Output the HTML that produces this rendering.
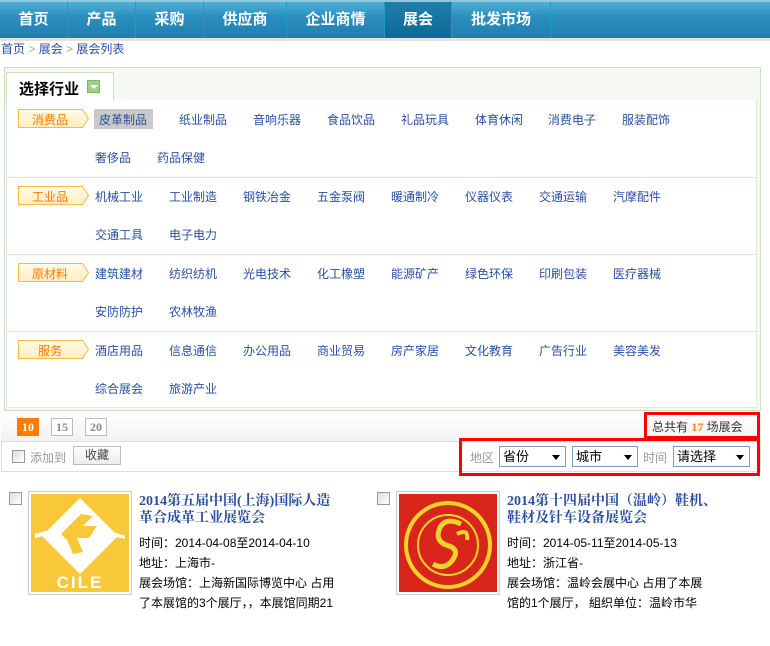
<!DOCTYPE html>
<html><head><meta charset="utf-8"><style>
*{margin:0;padding:0;box-sizing:border-box}
body{width:770px;height:646px;background:#fff;font-family:"Liberation Sans","Noto Sans CJK SC",sans-serif;font-size:12px;color:#000;position:relative;overflow:hidden}
.a{position:absolute;white-space:nowrap}
.nav{position:absolute;left:0;top:0;width:770px;height:38px;background:linear-gradient(#52b0d6,#2a8fbf 40%,#1f7fb0);border-top:2px solid #8cc8e0}
.nav div{position:absolute;top:0;height:36px;line-height:36px;text-align:center;color:#fff;font-weight:bold;font-size:15px;border-right:1px solid #1a9ccc}
.nav .on{background:linear-gradient(#1f7fac,#0f6996)}
.lk{color:#2a4fa0;font-size:12px}
.tag{position:absolute;left:18px;width:72px;height:20px}
.tag span{position:absolute;left:0;width:64px;top:2px;text-align:center;color:#ff7a00;font-size:12px}
.sep{position:absolute;left:7px;width:749px;height:1px;background:#d6ebcf}
.pg{position:absolute;top:418px;height:18px;width:22px;border:1px solid #bbb;background:#fff;text-align:center;line-height:16px;font-weight:bold;color:#888;font-family:"Liberation Serif",serif;font-size:12px}
.sel{position:absolute;top:446px;height:21px;border:1px solid #7f9db9;background:#fff;font-size:13px;line-height:19px;padding-left:3px}
.sel i{position:absolute;right:5px;top:8px;width:0;height:0;border-left:4px solid transparent;border-right:4px solid transparent;border-top:5px solid #000}
.cb{position:absolute;width:13px;height:13px;border:1px solid #999;background:linear-gradient(135deg,#ddd,#fff)}
.tt{position:absolute;color:#2a4fa0;font-weight:bold;font-size:14px;line-height:17px;font-family:"Liberation Serif","Noto Serif CJK SC",serif}
.inf{position:absolute;font-size:12px;line-height:20px}
</style></head><body>
<div class="nav">
<div style="left:0;width:68px">首页</div>
<div style="left:68px;width:68px">产品</div>
<div style="left:136px;width:68px">采购</div>
<div style="left:204px;width:83px">供应商</div>
<div style="left:287px;width:98px">企业商情</div>
<div class="on" style="left:385px;width:67px">展会</div>
<div style="left:452px;width:99px">批发市场</div>
</div>
<div class="a" style="left:0;top:38px;width:770px;height:3px;background:#e2e2e2"></div>
<div class="a lk" style="left:1px;top:42px;line-height:15px">首页 <span style="color:#aaa">&gt;</span> 展会 <span style="color:#aaa">&gt;</span> 展会列表</div>

<div class="a" style="left:4px;top:67px;width:757px;height:344px;border:1px solid #c9e1c0;background:#f5f9f2"></div>
<div class="a" style="left:6px;top:100px;width:751px;height:308px;background:#fff;border-left:1px solid #ddefd6;border-right:1px solid #ddefd6;border-bottom:1px solid #ddefd6"></div>
<div class="a" style="left:6px;top:72px;width:108px;height:29px;background:#fff;border:1px solid #c9e1c0;border-bottom:none"></div>
<div class="a" style="left:19px;top:78px;font-size:15px;font-weight:bold">选择行业</div>
<div class="a" style="left:87px;top:80px;width:13px;height:13px;background:#9fd08a;border:1px solid #7cb866"><div style="margin:4px auto 0;width:0;height:0;border-left:4px solid transparent;border-right:4px solid transparent;border-top:4px solid #fff"></div></div>

<svg class="a" style="left:0;top:0" width="770" height="410">
<defs><linearGradient id="g" x1="0" y1="0" x2="0" y2="1"><stop offset="0" stop-color="#fffbe8"/><stop offset="1" stop-color="#ffeebf"/></linearGradient></defs>
<g fill="url(#g)" stroke="#f8b84a" stroke-width="1">
<path d="M18.5,109.5H82.5L88.5,118.5L82.5,127.5H18.5Z"/>
<path d="M18.5,186.5H82.5L88.5,195.5L82.5,204.5H18.5Z"/>
<path d="M18.5,263.5H82.5L88.5,272.5L82.5,281.5H18.5Z"/>
<path d="M18.5,340.5H82.5L88.5,349.5L82.5,358.5H18.5Z"/>
</g></svg>
<div class="tag" style="top:109px"><span>消费品</span></div>
<div class="tag" style="top:186px"><span>工业品</span></div>
<div class="tag" style="top:263px"><span>原材料</span></div>
<div class="tag" style="top:340px"><span>服务</span></div>
<div class="a" style="left:94px;top:109px;width:59px;height:20px;background:#c9c9c9"></div>
<div class="sep" style="top:177px"></div><div class="sep" style="top:254px"></div><div class="sep" style="top:331px"></div>

<div class="a lk" style="left:99px;top:111px">皮革制品</div><div class="a lk" style="left:179px;top:111px">纸业制品</div><div class="a lk" style="left:253px;top:111px">音响乐器</div><div class="a lk" style="left:327px;top:111px">食品饮品</div><div class="a lk" style="left:401px;top:111px">礼品玩具</div><div class="a lk" style="left:475px;top:111px">体育休闲</div><div class="a lk" style="left:548px;top:111px">消费电子</div><div class="a lk" style="left:622px;top:111px">服装配饰</div>
<div class="a lk" style="left:95px;top:149px">奢侈品</div><div class="a lk" style="left:157px;top:149px">药品保健</div>

<div class="a lk" style="left:95px;top:188px">机械工业</div><div class="a lk" style="left:169px;top:188px">工业制造</div><div class="a lk" style="left:243px;top:188px">钢铁冶金</div><div class="a lk" style="left:317px;top:188px">五金泵阀</div><div class="a lk" style="left:391px;top:188px">暖通制冷</div><div class="a lk" style="left:465px;top:188px">仪器仪表</div><div class="a lk" style="left:539px;top:188px">交通运输</div><div class="a lk" style="left:613px;top:188px">汽摩配件</div>
<div class="a lk" style="left:95px;top:226px">交通工具</div><div class="a lk" style="left:169px;top:226px">电子电力</div>

<div class="a lk" style="left:95px;top:265px">建筑建材</div><div class="a lk" style="left:169px;top:265px">纺织纺机</div><div class="a lk" style="left:243px;top:265px">光电技术</div><div class="a lk" style="left:317px;top:265px">化工橡塑</div><div class="a lk" style="left:391px;top:265px">能源矿产</div><div class="a lk" style="left:465px;top:265px">绿色环保</div><div class="a lk" style="left:539px;top:265px">印刷包装</div><div class="a lk" style="left:613px;top:265px">医疗器械</div>
<div class="a lk" style="left:95px;top:303px">安防防护</div><div class="a lk" style="left:169px;top:303px">农林牧渔</div>

<div class="a lk" style="left:95px;top:342px">酒店用品</div><div class="a lk" style="left:169px;top:342px">信息通信</div><div class="a lk" style="left:243px;top:342px">办公用品</div><div class="a lk" style="left:317px;top:342px">商业贸易</div><div class="a lk" style="left:391px;top:342px">房产家居</div><div class="a lk" style="left:465px;top:342px">文化教育</div><div class="a lk" style="left:539px;top:342px">广告行业</div><div class="a lk" style="left:613px;top:342px">美容美发</div>
<div class="a lk" style="left:95px;top:380px">综合展会</div><div class="a lk" style="left:169px;top:380px">旅游产业</div>

<div class="a" style="left:1px;top:412px;width:760px;height:30px;background:linear-gradient(#fff,#f2f2f2);border-bottom:1px solid #ddd"></div>
<div class="pg" style="left:17px;background:#ff7a00;border-color:#ff7a00;color:#fff">10</div>
<div class="pg" style="left:51px">15</div>
<div class="pg" style="left:85px">20</div>
<div class="a" style="left:644px;top:412px;width:116px;height:27px;border:3px solid #f00"></div>
<div class="a" style="left:652px;top:418px;color:#333">总共有 <b style="color:#ff7a00;font-family:'Liberation Serif',serif">17</b> 场展会</div>

<div class="a" style="left:1px;top:442px;width:760px;height:30px;border:1px solid #ddd;border-top:none"></div>
<div class="cb" style="left:12px;top:450px"></div>
<div class="a" style="left:30px;top:449px;color:#999">添加到</div>
<div class="a" style="left:73px;top:446px;width:48px;height:19px;border:1px solid #bbb;background:linear-gradient(#fff,#ececec);text-align:center;line-height:17px;color:#444">收藏</div>
<div class="a" style="left:459px;top:438px;width:301px;height:38px;border:3px solid #f00"></div>
<div class="a" style="left:470px;top:449px;color:#999">地区</div>
<div class="sel" style="left:499px;width:67px">省份<i></i></div>
<div class="sel" style="left:572px;width:66px">城市<i></i></div>
<div class="a" style="left:643px;top:449px;color:#999">时间</div>
<div class="sel" style="left:673px;width:77px">请选择<i></i></div>

<div class="cb" style="left:9px;top:492px"></div>
<div class="a" style="left:28px;top:491px;width:104px;height:104px;border:1px solid #ccc;padding:2px">
<svg width="98" height="98" viewBox="0 0 98 98"><rect width="98" height="98" fill="#f6c83a"/>
<path d="M49,4L87,42L49,80L11,42Z" fill="#fff"/>
<path d="M4,40Q49,25 94,42L94,45Q49,32 4,44Z" fill="#fff"/>
<path d="M30,40L50,20L62,22L52,32L66,32L58,44L46,44L52,58L42,60L36,46Z" fill="#f6c83a"/>
<text x="49" y="94" text-anchor="middle" fill="#fff" font-size="17" font-weight="bold" font-family="Liberation Sans" letter-spacing="2">CILE</text></svg></div>
<div class="tt" style="left:139px;top:493px">2014第五届中国(上海)国际人造<br>革合成革工业展览会</div>
<div class="inf" style="left:139px;top:533px">时间：2014-04-08至2014-04-10<br>地址：上海市-<br>展会场馆：上海新国际博览中心 占用<br>了本展馆的3个展厅，，本展馆同期21</div>

<div class="cb" style="left:377px;top:492px"></div>
<div class="a" style="left:396px;top:491px;width:104px;height:104px;border:1px solid #ccc;padding:2px">
<svg width="98" height="98" viewBox="0 0 98 98"><rect width="98" height="98" fill="#d8261c"/>
<circle cx="49" cy="51" r="44" fill="#f2d32a"/><circle cx="49" cy="51" r="40" fill="#d8261c"/><circle cx="49" cy="51" r="30" fill="none" stroke="#f2d32a" stroke-width="2"/>
<path d="M62,30Q45,22 40,36Q36,48 50,52Q62,56 52,68Q44,76 34,70" fill="none" stroke="#f2d32a" stroke-width="5"/>
<path d="M58,40Q70,34 68,46" fill="none" stroke="#f2d32a" stroke-width="4"/></svg></div>
<div class="tt" style="left:507px;top:493px">2014第十四届中国（温岭）鞋机、<br>鞋材及针车设备展览会</div>
<div class="inf" style="left:507px;top:533px">时间：2014-05-11至2014-05-13<br>地址：浙江省-<br>展会场馆：温岭会展中心 占用了本展<br>馆的1个展厅， 組织单位：温岭市华</div>
</body></html>
